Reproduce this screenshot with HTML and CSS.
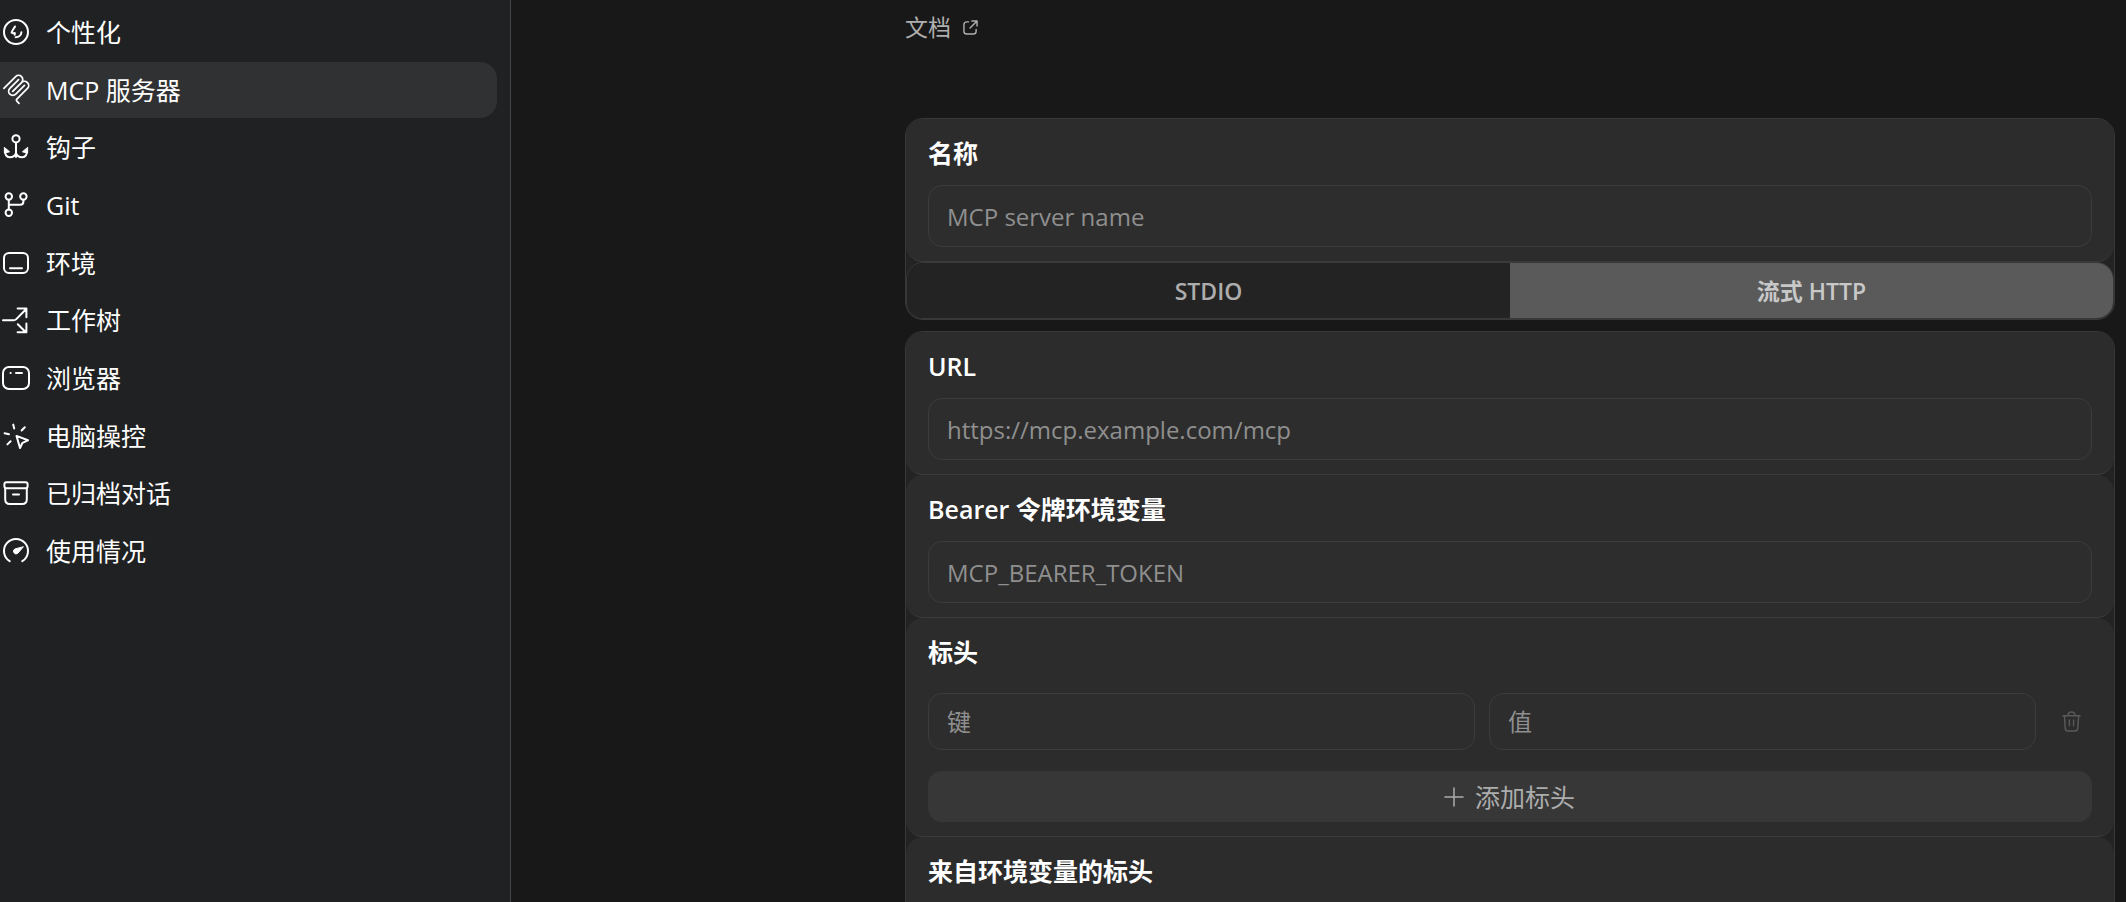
FILE: index.html
```
<!DOCTYPE html>
<html lang="zh-CN">
<head>
<meta charset="utf-8">
<title>MCP 服务器</title>
<link rel="stylesheet" href="styles.css">
</head>
<body>
<div class="app">
  <aside class="sidebar">
    <nav class="nav">
      <a class="nav-item" href="#personalization">
        <svg class="icon" viewBox="0 0 26 26"><circle cx="13" cy="13" r="12"/><path d="M12 7.500C11 9.400 9.200 11.200 8.600 13.600c1 .6 2.200 .7 3.200 .4l-.1 1.800M18.400 13.200c-.2 3-2.600 5-5.800 5"/></svg>
        个性化</a>
      <a class="nav-item active" href="#mcp" aria-current="page">
        <svg class="icon mcp" viewBox="13 19 150 150"><path d="M18 84.850 85.880 16.970C95.250 7.600 110.450 7.600 119.820 16.970C129.200 26.340 129.200 41.540 119.820 50.910L68.560 102.180M69.270 101.470 119.820 50.910C129.200 41.540 144.390 41.540 153.770 50.910L154.120 51.270C163.490 60.640 163.490 75.830 154.120 85.210L92.720 146.600C89.600 149.720 89.600 154.790 92.720 157.910L105.330 170.520M102.850 33.940 52.650 84.150C43.280 93.520 43.280 108.710 52.650 118.090C62.020 127.460 77.220 127.460 86.590 118.090L136.790 67.880"/></svg>
        MCP 服务器</a>
      <a class="nav-item" href="#hooks">
        <svg class="icon" viewBox="0 0 26 26"><circle cx="13" cy="4.800" r="3.600"/><path d="M13 8.400V23M2.200 16.200c-.6 4.400 1.400 7 4.600 7 3.400 0 5.600-2 6.200-4.200.6 2.200 2.800 4.200 6.200 4.200 3.200 0 5.200-2.600 4.600-7"/><path class="solid" d="M1.600 13.600 6.600 17.800 1.800 19ZM24.400 13.600 19.400 17.800 24.200 19Z"/></svg>
        钩子</a>
      <a class="nav-item" href="#git">
        <svg class="icon" viewBox="0 0 26 26"><circle cx="5.800" cy="4.500" r="3.200"/><circle cx="20.400" cy="4.500" r="3.200"/><circle cx="5.800" cy="20.800" r="3.200"/><path d="M5.800 7.700v9.900M20.400 7.700v1.800c0 2-1.200 3.300-3.200 3.300H5.800"/></svg>
        Git</a>
      <a class="nav-item" href="#environment">
        <svg class="icon" viewBox="0 0 26 26"><rect x="1" y="3" width="24" height="20" rx="5"/><path d="M7 18.300h12"/></svg>
        环境</a>
      <a class="nav-item" href="#worktree">
        <svg class="icon" viewBox="0 0 26 26"><path d="M0 13.300h10.500c1.200 0 2-.4 2.800-1.200L23 2.300M14.600 1.500h8.800v8.800M14.800 17.300l8 8M14.600 25.300h8.800v-8.800"/></svg>
        工作树</a>
      <a class="nav-item" href="#browser">
        <svg class="icon" viewBox="0 0 26 26"><rect x="0" y="2" width="26" height="22" rx="6"/><path d="M7.500 8h.2M13 8h6"/></svg>
        浏览器</a>
      <a class="nav-item" href="#computer">
        <svg class="icon" viewBox="0 0 26 26"><path d="M10.200 1.600l1 4M21.800 4.200 18.600 7.500M1.600 10.200l4.400 1M7.600 18.200l-3.200 3.200M13.500 12.900 25 17.300l-5.500 2.500L17 25Z"/></svg>
        电脑操控</a>
      <a class="nav-item" href="#archived">
        <svg class="icon" viewBox="0 0 26 26"><rect x="1.400" y="2.200" width="23.200" height="6" rx="2"/><path d="M2.200 8.200v11c0 3 1.400 4.800 4.600 4.800h12.400c3.200 0 4.600-1.800 4.600-4.800v-11M10 14.400h6"/></svg>
        已归档对话</a>
      <a class="nav-item" href="#usage">
        <svg class="icon" viewBox="0 0 26 26"><path d="M6.700 23.200a12 12 0 1 1 12.600 0"/><path class="solid" d="M20.200 9 14.800 15.300a2.600 2.600 0 1 1-3.300-4.100Z"/></svg>
        使用情况</a>
    </nav>
  </aside>

  <main class="main">
    <a class="docs" href="#docs">文档
      <svg class="icon-link" viewBox="0 0 16 16"><path d="M6 2H4C2 2 1 3 1 5v7c0 2 1 3 3 3h7c2 0 3-1 3-3v-2M9.500 1H15v5.500M15 1 7.500 8.500"/></svg>
    </a>

    <form class="form">
      <section class="group">
        <div class="card">
          <label class="label" for="name">名称</label>
          <input class="field" id="name" type="text" placeholder="MCP server name">
        </div>
        <div class="segmented">
          <button class="segment" type="button" aria-pressed="false">STDIO</button>
          <button class="segment selected" type="button" aria-pressed="true">流式 HTTP</button>
        </div>
      </section>

      <section class="group">
        <div class="card">
          <label class="label" for="url">URL</label>
          <input class="field" id="url" type="text" placeholder="https://mcp.example.com/mcp">
        </div>
        <div class="card">
          <label class="label" for="token">Bearer 令牌环境变量</label>
          <input class="field" id="token" type="text" placeholder="MCP_BEARER_TOKEN">
        </div>
        <div class="card">
          <h2 class="label">标头</h2>
          <div class="pair">
            <input class="field compact" type="text" placeholder="键" aria-label="键">
            <input class="field compact" type="text" placeholder="值" aria-label="值">
            <button class="remove" type="button" aria-label="删除">
              <svg class="icon-trash" viewBox="0 0 20 22"><path d="M1 5h18M6 5c.4-2.600 1.800-4 4-4s3.600 1.400 4 4M2.500 5l.9 13c.1 2 1.100 3 3.100 3h7c2 0 3-1 3.100-3l.9-13M7.800 9.500v6M12.200 9.500v6"/></svg>
            </button>
          </div>
          <button class="add" type="button">
            <svg class="icon-plus" viewBox="0 0 18 18"><path d="M9 0v18M0 9h18"/></svg>
            添加标头</button>
        </div>
        <div class="card last">
          <h2 class="label">来自环境变量的标头</h2>
        </div>
      </section>
    </form>
  </main>
</div>
</body>
</html>
```
FILE: styles.css
```
* {
  box-sizing: border-box;
}

body {
  margin: 0;
  background: #181818;
  color: #fff;
  font-family: "Open Sans", "Noto Sans CJK SC", sans-serif;
  font-size: 25px;
  line-height: 36px;
}

button,
input {
  margin: 0;
  font: inherit;
}

svg {
  flex: none;
  fill: none;
  stroke: currentColor;
  stroke-linecap: round;
  stroke-linejoin: round;
  overflow: visible;
}

.app {
  display: flex;
  height: 100vh;
  overflow: hidden;
}

.sidebar {
  flex: none;
  width: 511px;
  padding: 4px 13px 0 0;
  border-right: 1px solid #454545;
  background: #202123;
}

.nav {
  display: flex;
  flex-direction: column;
  justify-content: space-between;
  min-height: 575px;
}

.nav-item {
  display: flex;
  align-items: center;
  gap: 17px;
  height: 56px;
  padding-left: 3px;
  border-radius: 0 17px 17px 0;
  color: #fff;
  text-decoration: none;
}

.nav-item.active {
  background: #303133;
}

.icon {
  width: 26px;
  height: 26px;
  stroke-width: 2;
}

.icon.mcp {
  stroke-width: 10;
}

.solid {
  fill: currentColor;
  stroke-width: 1;
}

.main {
  flex: 1;
  min-width: 0;
  padding: 9px 11px 0 394px;
}

.docs {
  display: flex;
  align-items: center;
  gap: 12px;
  width: fit-content;
  color: #afafaf;
  font-size: 23px;
  text-decoration: none;
}

.icon-link {
  width: 15px;
  height: 15px;
  stroke-width: 1.500;
}

.form {
  display: flex;
  flex-direction: column;
  gap: 11px;
  margin-top: 73px;
}

.group {
  border: 1px solid #383838;
  border-radius: 18px;
  background: #232323;
}

.card {
  display: flex;
  flex-direction: column;
  padding: 16px 22px 14px;
  border-bottom: 1px solid #3b3b3b;
  border-radius: 17px;
  background: #2c2c2c;
}

.card.last {
  min-height: 144px;
}

.label {
  margin: 0;
  font-size: 25px;
  font-weight: 600;
}

.field {
  min-width: 0;
  height: 62px;
  margin-top: 14px;
  padding: 0 18px;
  border: 1px solid #3c3c3c;
  border-radius: 14px;
  outline: none;
  background: #2d2d2d;
  color: #fff;
  font-size: 24px;
}

.field::placeholder {
  color: #8f8f8f;
  opacity: 1;
}

.field:focus {
  border-color: #6a6a6a;
}

.field.compact {
  flex: 1;
  height: 57px;
  margin: 0;
}

.pair {
  display: flex;
  align-items: center;
  gap: 14px;
  margin: 23px 0 21px;
}

.remove {
  display: flex;
  align-items: center;
  justify-content: center;
  width: 42px;
  height: 42px;
  padding: 0;
  border: 0;
  background: none;
  color: #5a5a5a;
}

.icon-trash {
  width: 19px;
  height: 21px;
  stroke-width: 1.500;
}

.add {
  display: flex;
  align-items: center;
  justify-content: center;
  gap: 12px;
  height: 51px;
  padding: 0;
  border: 0;
  border-radius: 14px;
  background: #373737;
  color: #acacac;
}

.icon-plus {
  width: 18px;
  height: 18px;
  stroke-width: 1.500;
}

.segmented {
  display: grid;
  grid-template-columns: 1fr 1fr;
  height: 57px;
  overflow: hidden;
  border: 1px solid #383838;
  border-radius: 17px;
}

.segment {
  padding: 0;
  border: 0;
  background: #232323;
  color: #adadad;
  font-size: 23px;
  font-weight: 600;
}

.segment.selected {
  background: #5a5a5a;
  color: #c8c8c8;
}
```
